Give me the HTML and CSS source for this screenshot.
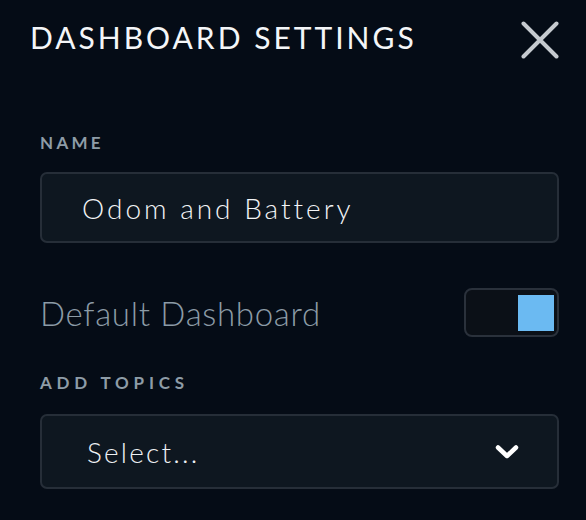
FILE: index.html
```html
<!DOCTYPE html>
<html>
<head>
<meta charset="utf-8">
<link rel="stylesheet" href="styles.css">
</head>
<body>
<div class="panel">
  <div class="header">
    <h1 class="title">DASHBOARD SETTINGS</h1>
    <button class="close" aria-label="Close">
      <svg width="38" height="38" viewBox="0 0 38 38"><path d="M2.5 2.5 L35.5 35.5 M35.5 2.5 L2.5 35.5" stroke="#c6cacf" stroke-width="4" stroke-linecap="round" fill="none"/></svg>
    </button>
  </div>
  <div class="label name-label">NAME</div>
  <div class="input">Odom and Battery</div>
  <div class="toggle-row">
    <span class="toggle-label">Default Dashboard</span>
    <span class="toggle"><span class="knob"></span></span>
  </div>
  <div class="label topics-label">ADD TOPICS</div>
  <div class="select">
    <span class="select-text">Select...</span>
    <svg class="chevron" width="24" height="16" viewBox="0 0 24 16"><path d="M3 3.5 L12 12 L21 3.5" stroke="#ffffff" stroke-width="4.5" stroke-linecap="round" stroke-linejoin="round" fill="none"/></svg>
  </div>
</div>
</body>
</html>
```
FILE: styles.css
```css
* { box-sizing: border-box; }
html, body { margin: 0; padding: 0; }
body {
  background: #050c16;
  font-family: Lato, "Open Sans", sans-serif;
  width: 586px;
  height: 520px;
  overflow: hidden;
}
.panel {
  padding: 0 27px 0 40px;
}
.header {
  height: 80px;
  display: flex;
  align-items: center;
  justify-content: space-between;
  margin-left: -10px;
}
.title {
  margin: 0 0 6px 0;
  font-size: 30px;
  font-weight: 400;
  letter-spacing: 3px;
  color: #f4f6f8;
  line-height: 36px;
}
.close {
  background: none;
  border: 0;
  padding: 0;
  width: 38px;
  height: 38px;
  display: block;
}
.close svg { display: block; }
.label {
  font-size: 17px;
  font-weight: 700;
  line-height: 20px;
  color: #8e9ca7;
}
.name-label { margin-top: 53px; letter-spacing: 3.3px; }
.input {
  margin-top: 19px;
  height: 71px;
  border: 2px solid #262e38;
  border-radius: 7px;
  background: #0e1720;
  display: flex;
  align-items: center;
  padding-left: 40px;
  font-size: 28px;
  font-weight: 300;
  letter-spacing: 3px;
  color: #f2f4f6;
}
.toggle-row {
  margin-top: 45px;
  height: 49px;
  display: flex;
  align-items: center;
  justify-content: space-between;
}
.toggle-label {
  font-size: 33px;
  font-weight: 300;
  color: #8c9ba6;
  letter-spacing: 0.7px;
}
.toggle {
  width: 95px;
  height: 49px;
  border: 2px solid #2a313b;
  border-radius: 8px;
  background: #0b1017;
  display: flex;
  justify-content: flex-end;
  align-items: center;
  padding-right: 3px;
}
.knob {
  width: 36px;
  height: 36px;
  background: #6bbaf2;
}
.topics-label { margin-top: 36px; letter-spacing: 4.8px; }
.select {
  margin-top: 21px;
  height: 75px;
  border: 2px solid #262e38;
  border-radius: 7px;
  background: #0e1720;
  display: flex;
  align-items: center;
  justify-content: space-between;
  padding: 0 38px 0 45px;
}
.select-text {
  font-size: 28px;
  font-weight: 300;
  letter-spacing: 2.2px;
  color: #eef1f4;
}
.chevron { display: block; }
```
